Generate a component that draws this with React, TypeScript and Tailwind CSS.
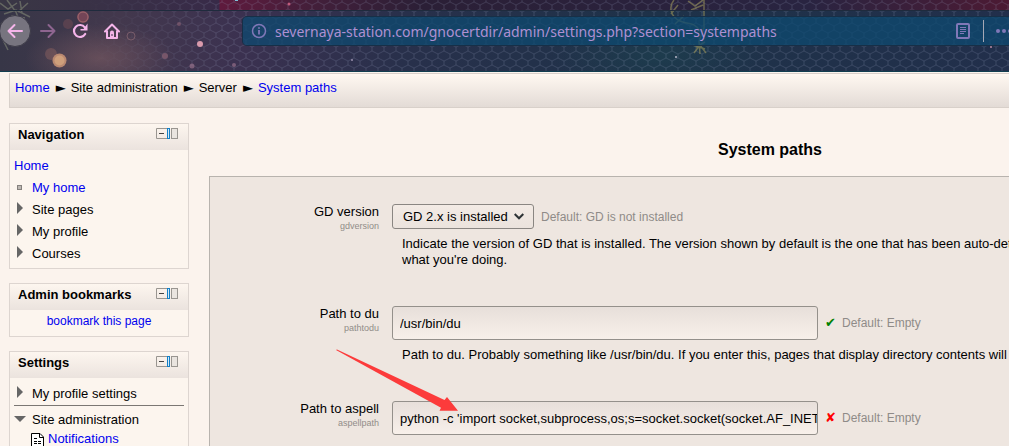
import type { ReactNode } from "react";

const LINK = "text-[#0000ee] hover:underline";

function Backdrop() {
  return (
    <svg className="absolute inset-0 h-full w-full" preserveAspectRatio="xMinYMin slice" aria-hidden="true">
      <defs>
        <linearGradient id="sky" x1="0" x2="1" y1="0" y2="0">
          <stop offset="0" stopColor="#373647" />
          <stop offset="0.12" stopColor="#43384d" />
          <stop offset="0.24" stopColor="#3b3150" />
          <stop offset="0.4" stopColor="#28304b" />
          <stop offset="0.65" stopColor="#1e3249" />
          <stop offset="1" stopColor="#222f4b" />
        </linearGradient>
        <linearGradient id="strip" x1="0" x2="1" y1="0" y2="0">
          <stop offset="0" stopColor="#3a3745" />
          <stop offset="0.217" stopColor="#382a48" />
          <stop offset="0.218" stopColor="#5f1a3d" />
          <stop offset="0.31" stopColor="#431f3a" />
          <stop offset="0.42" stopColor="#2b1f36" />
          <stop offset="0.8" stopColor="#292441" />
          <stop offset="1" stopColor="#4c1a33" />
        </linearGradient>
        <radialGradient id="haze">
          <stop offset="0" stopColor="#8a6468" stopOpacity="0.5" />
          <stop offset="1" stopColor="#8a6468" stopOpacity="0" />
        </radialGradient>
        <radialGradient id="teal">
          <stop offset="0" stopColor="#1d4250" stopOpacity="0.6" />
          <stop offset="1" stopColor="#1d4250" stopOpacity="0" />
        </radialGradient>
        <pattern id="hex" width="12" height="14" patternUnits="userSpaceOnUse">
          <path
            d="M6 0v2L0 5v4l6 3v2M6 2l6 3v4l-6 3"
            fill="none"
            stroke="#a0a4c8"
            strokeWidth="1"
            opacity="0.2"
          />
        </pattern>
        <linearGradient id="fade" x1="0" x2="1" y1="0" y2="0">
          <stop offset="0.08" stopColor="#000" />
          <stop offset="0.22" stopColor="#fff" />
        </linearGradient>
        <mask id="hexmask">
          <rect width="100%" height="100%" fill="url(#fade)" />
        </mask>
      </defs>
      <rect width="100%" height="100%" fill="url(#sky)" />
      <rect width="100%" height="11" fill="url(#strip)" />
      <ellipse cx="100" cy="58" rx="75" ry="34" fill="url(#haze)" />
      <ellipse cx="660" cy="55" rx="110" ry="35" fill="url(#teal)" />
      <rect width="100%" height="100%" fill="url(#hex)" mask="url(#hexmask)" />

      {/* foliage */}
      <g fill="none" stroke="#9aa184" strokeWidth="1.5" opacity="0.45">
        <path d="M0 3l8 6 9-6M4 14l12-4 10 5M7 0l9 12 3 8M1 24l11-8 13 2M20 1l2 12 8 4M0 35l6 8M3 40l5 10M18 12l10-9" />
      </g>
      <g fill="none" stroke="#9a935a" strokeWidth="1.5" opacity="0.6">
        <path d="M704 0v28l-5 13 1 13M688 1l7 5 8-6M691 10l12-5M674 0c-6 7-3 17 6 21s13 0 20 10M678 5l-7 9M684 16l-9 8M696 47l9-5M694 53l6-8 6 8M693 45l12 4" />
      </g>

      {/* bokeh lights */}
      <circle cx="83" cy="17" r="6" fill="#8b4c5c" opacity="0.7" />
      <circle cx="83" cy="17" r="5" fill="none" stroke="#b47878" opacity="0.7" />
      <circle cx="68" cy="24" r="5" fill="#8b5558" opacity="0.35" />
      <circle cx="51" cy="54" r="6" fill="#a57068" opacity="0.35" />
      <circle cx="59.500" cy="60.500" r="7" fill="#b98870" />
      <circle cx="59.500" cy="60.500" r="5" fill="#cf9f7b" />
      <circle cx="131" cy="36" r="4" fill="none" stroke="#a47a82" opacity="0.5" />
      <circle cx="165" cy="56" r="3" fill="#9a6a7c" opacity="0.6" />
      <circle cx="179" cy="24" r="2" fill="#9a6a7c" opacity="0.5" />
      <circle cx="200" cy="44" r="3" fill="#d99aac" />
      <circle cx="192" cy="66" r="2.500" fill="#a37a92" opacity="0.6" />
      <circle cx="234" cy="65" r="2" fill="#a37a92" opacity="0.6" />
      <circle cx="289" cy="4" r="1.500" fill="#c05b7c" />
      <circle cx="352" cy="60" r="1" fill="#9a8fae" />
      <circle cx="676" cy="57" r="1" fill="#b9b9c9" />
      <circle cx="991" cy="47" r="1" fill="#b98aa0" />
      <rect x="235" y="0" width="3" height="1" fill="#7fc0d8" />
      <rect y="10" width="100%" height="1" fill="#1f2b3d" />
      <rect y="71" width="100%" height="1" fill="#123e50" />
    </svg>
  );
}

function BrowserBar() {
  return (
    <header className="relative h-[72px] overflow-hidden pt-[11px]">
      <Backdrop />
      <div className="relative flex h-10 items-center text-[#f5b5ea]">
        <button
          aria-label="Back"
          className="-ml-px flex size-8 shrink-0 items-center justify-center rounded-full border border-[#3d3b48] bg-[#77747f]"
        >
          <svg width="16" height="16" viewBox="0 0 16 16" fill="none" stroke="currentColor" strokeWidth="2" strokeLinecap="round" strokeLinejoin="round">
            <path d="M15 8H1.500M7.500 2L1.500 8l6 6" />
          </svg>
        </button>
        <button aria-label="Forward" className="ml-2 flex w-[18px] shrink-0 justify-center text-[#8e6590]">
          <svg width="16" height="16" viewBox="0 0 16 16" fill="none" stroke="currentColor" strokeWidth="2" strokeLinecap="round" strokeLinejoin="round">
            <path d="M1 8h13.500M8.500 2l6 6-6 6" />
          </svg>
        </button>
        <button aria-label="Reload" className="ml-[15px] flex shrink-0">
          <svg width="16" height="16" viewBox="0 0 16 16" fill="none" stroke="currentColor" strokeWidth="2.200">
            <path d="M12.800 4.400A6 6 0 1 0 13.200 11" strokeLinecap="round" />
            <path d="M15.500 .5v7H8.500v-1.500h3z" fill="currentColor" stroke="none" />
          </svg>
        </button>
        <button aria-label="Home" className="ml-4 flex shrink-0">
          <svg width="16" height="16" viewBox="0 0 16 16" fill="none" stroke="currentColor" strokeWidth="2" strokeLinejoin="round">
            <path d="M1 8.500L8 1.500l7 7" strokeLinecap="round" />
            <path d="M3 7.500V15h10V7.500" />
            <path d="M6 15V9.500a2 2 0 0 1 4 0V15z" fill="currentColor" stroke="none" />
            <rect x="7.500" y="11" width="1" height="2" fill="#453951" stroke="none" />
          </svg>
        </button>
        <div className="ml-[123px] flex h-7 flex-1 items-center rounded-l-sm bg-[#0e4a70]/75 pl-2 shadow-[0_0_0_1px_#172f47]">
          <svg width="16" height="16" viewBox="0 0 16 16" className="shrink-0" fill="none" stroke="#8078b8" strokeWidth="1.500">
            <circle cx="8" cy="8" r="6.500" />
            <path d="M8 7v4.500M8 4.200v1.600" strokeWidth="1.800" />
          </svg>
          <input
            aria-label="Address"
            readOnly
            value="severnaya-station.com/gnocertdir/admin/settings.php?section=systempaths"
            className="ml-2 h-7 min-w-0 flex-1 bg-transparent font-['Noto_Sans',sans-serif] text-sm text-[#ae90d2] outline-none"
          />
          <button aria-label="Reader view" className="flex shrink-0">
            <svg width="14" height="16" viewBox="0 0 14 16" fill="none" stroke="#8078b8">
              <rect x="1" y="1" width="12" height="14" rx="1" strokeWidth="2" />
              <path d="M4 4.500h6M4 6.500h6M4 8.500h6M4 10.500h4" />
            </svg>
          </button>
          <span className="ml-[13px] h-[22px] w-px shrink-0 bg-[#a5a8b5]" />
          <button aria-label="Page actions" className="ml-3 flex w-[13px] shrink-0 overflow-hidden">
            <svg width="16" height="4" viewBox="0 0 16 4" fill="#8078b8" className="shrink-0">
              <circle cx="2" cy="2" r="2" />
              <circle cx="8" cy="2" r="2" />
              <circle cx="14" cy="2" r="2" />
            </svg>
          </button>
        </div>
      </div>
    </header>
  );
}

function Block({ title, children }: { title: string; children: ReactNode }) {
  return (
    <section className="border border-[#ddd5d0] bg-[#fcf5ee]">
      <div className="flex h-[26px] justify-between bg-linear-to-b from-[#fdf6ef] to-[#ebe3de] pr-[10px] pl-2">
        <h2 className="pt-[3px] text-[13px] leading-4 font-bold">{title}</h2>
        <div className="flex items-start pt-1">
          <button aria-label={`Hide ${title} block`} className="flex">
            <svg width="11" height="11" viewBox="0 0 11 11" fill="none">
              <path d="M11 .5H.5v10H11" stroke="#999590" />
              <path d="M3 5.500h5" stroke="#444" />
            </svg>
          </button>
          <button aria-label={`Dock ${title} block`} className="flex">
            <svg width="11" height="11" viewBox="0 0 11 11" fill="none">
              <rect x=".5" y=".5" width="2" height="10" fill="#d5e8f5" stroke="#1280c8" />
              <rect x="4.500" y=".5" width="6" height="10" fill="#e9e4df" stroke="#999590" />
            </svg>
          </button>
        </div>
      </div>
      {children}
    </section>
  );
}

function Collapsed() {
  return (
    <svg width="18" height="12" viewBox="0 0 18 12" className="mb-1 shrink-0" fill="#666" aria-hidden="true">
      <path d="M3 0l6 6-6 6z" />
    </svg>
  );
}

function Sidebar() {
  return (
    <aside className="flex w-[180px] shrink-0 flex-col gap-[14px]">
      <Block title="Navigation">
        <ul className="px-1 pt-[5px] pb-[3px] text-[13px] leading-[22px]">
          <li>
            <a href="#home" className={LINK}>Home</a>
          </li>
          <li className="flex items-center">
            <svg width="18" height="6" viewBox="0 0 18 6" aria-hidden="true">
              <rect x="3.500" y=".5" width="4" height="4" fill="#bdb8b3" stroke="#85817d" />
            </svg>
            <a href="#my" className={LINK}>My home</a>
          </li>
          {["Site pages", "My profile", "Courses"].map((item) => (
            <li key={item} className="flex items-center">
              <Collapsed />
              {item}
            </li>
          ))}
        </ul>
      </Block>
      <Block title="Admin bookmarks">
        <p className="pt-1 pb-2 text-center text-xs leading-[14px]">
          <a href="#bookmark" className={LINK}>bookmark this page</a>
        </p>
      </Block>
      <Block title="Settings">
        <ul className="px-1 pt-[5px] text-[13px]">
          <li className="flex h-[22px] items-center">
            <Collapsed />
            My profile settings
          </li>
          <li className="border-t border-[#7b7773] pt-1">
            <div className="flex h-5 items-center">
              <svg width="18" height="6" viewBox="0 0 18 6" className="mb-[3px]" fill="#666" aria-hidden="true">
                <path d="M0 0h12L6 6z" />
              </svg>
              Site administration
            </div>
            <div className="ml-[17px] flex h-[18px] items-start leading-[18px]">
              <svg width="14" height="16" viewBox="0 0 14 16" className="mt-[3px] mr-[3px] shrink-0" fill="none" stroke="#000" aria-hidden="true">
                <path d="M.5.500H9l3.500 3.500v11.500H.5z" fill="#fff" />
                <path d="M8.500.5v4h4M3 5.500h3M3 8.500h3M7 8.500h3M3 10.500h3M7 10.500h3" />
              </svg>
              <a href="#notifications" className={LINK}>Notifications</a>
            </div>
          </li>
        </ul>
      </Block>
    </aside>
  );
}

type SettingProps = {
  id: string;
  label: string;
  fallback: string;
  status?: "ok" | "missing";
  help?: string;
  children: ReactNode;
};

function Setting({ id, label, fallback, status, help, children }: SettingProps) {
  return (
    <div className="flex">
      <div className="w-[169px] shrink-0 text-right">
        <label htmlFor={id} className="block text-[13px] leading-4">{label}</label>
        <span className="block text-[9px] leading-3 text-[#918d89]">{id}</span>
      </div>
      <div className="ml-[13px] min-w-0 flex-1">
        <div className="flex items-center">
          {children}
          {status === "ok" && <span className="ml-[7px] w-3 font-['DejaVu_Sans'] text-[13px] text-[#008000]">✔</span>}
          {status === "missing" && <span className="ml-[7px] w-3 font-['DejaVu_Sans'] text-[13px] text-[#ff0000]">✘</span>}
          <span className={`text-xs text-[#8f8b88] ${status ? "ml-[5px]" : "ml-[7px]"}`}>{fallback}</span>
        </div>
        {help && <p className="mt-[7px] mr-10 ml-[10px] text-[13px] leading-4">{help}</p>}
      </div>
    </div>
  );
}

function PathInput({ id, value }: { id: string; value: string }) {
  return (
    <input
      id={id}
      defaultValue={value}
      className="h-[34px] w-[426px] rounded-[3px] border border-[#94908b] bg-linear-to-b from-[#e7dfda] to-[#f8f0ea] pl-[7px] text-[13px] outline-none"
    />
  );
}

function SettingsForm() {
  return (
    <form className="relative flex flex-col gap-[38px] border border-[#b8b3ae] bg-[#eee6e0] pt-[27px] pb-10">
      <Setting
        id="gdversion"
        label="GD version"
        fallback="Default: GD is not installed"
        help="Indicate the version of GD that is installed. The version shown by default is the one that has been auto-detected. Don't change this unless you really know what you're doing."
      >
        <div className="relative">
          <select
            id="gdversion"
            className="block h-[25px] w-[142px] appearance-none rounded-[3px] border border-[#8a8682] bg-linear-to-b from-[#f3ebe5] to-[#ebe3dd] pl-[10px] text-[13px] outline-none"
          >
            <option>GD 2.x is installed</option>
          </select>
          <svg width="10" height="7" viewBox="0 0 10 7" className="pointer-events-none absolute top-[9px] right-[10px]" fill="none" stroke="#2e3436" strokeWidth="2" aria-hidden="true">
            <path d="M.7 1l4.300 4.300L9.300 1" />
          </svg>
        </div>
      </Setting>
      <Setting
        id="pathtodu"
        label="Path to du"
        fallback="Default: Empty"
        status="ok"
        help="Path to du. Probably something like /usr/bin/du. If you enter this, pages that display directory contents will run much faster."
      >
        <PathInput id="pathtodu" value="/usr/bin/du" />
      </Setting>
      <Setting id="aspellpath" label="Path to aspell" fallback="Default: Empty" status="missing">
        <PathInput id="aspellpath" value="python -c 'import socket,subprocess,os;s=socket.socket(socket.AF_INET" />
      </Setting>
      <svg width="123" height="62" viewBox="0 0 123 62" className="pointer-events-none absolute top-[172px] left-[126px]" fill="#fc3b3b" aria-hidden="true">
        <path d="M0 1l1-.5 107.500 50.500 2.500-3 11 13.700h-18.500l1.500-3z" />
      </svg>
    </form>
  );
}

export default function App() {
  return (
    <div className="h-screen overflow-hidden bg-[#fbf3ed] font-['Liberation_Sans',Arial,sans-serif] text-black">
      <BrowserBar />
      {/* The admin pages keep a desktop width and run off narrow windows */}
      <div className="min-w-[1340px] pt-px pl-[9px]">
        <nav aria-label="Breadcrumb" className="h-[35px] border border-r-0 border-[#d8d0ca] bg-linear-to-b from-[#fff8f1] to-[#e3dbd6]">
          <ol className="flex gap-[6px] pt-[6px] pl-[5px] text-[13px] leading-4">
            <li><a href="#home" className={LINK}>Home</a></li>
            <li className="flex gap-[5px]"><span className="font-['DejaVu_Sans']">►</span>Site administration</li>
            <li className="flex gap-[5px]"><span className="font-['DejaVu_Sans']">►</span>Server</li>
            <li className="flex gap-[5px]"><span className="font-['DejaVu_Sans']">►</span><a href="#systempaths" className={LINK}>System paths</a></li>
          </ol>
        </nav>
        <div className="mt-[15px] flex gap-5 pr-[9px]">
          <Sidebar />
          <main className="min-w-0 flex-1">
            <h1 className="pt-[17px] pb-4 text-center text-base leading-5 font-bold">System paths</h1>
            <SettingsForm />
          </main>
        </div>
      </div>
    </div>
  );
}
